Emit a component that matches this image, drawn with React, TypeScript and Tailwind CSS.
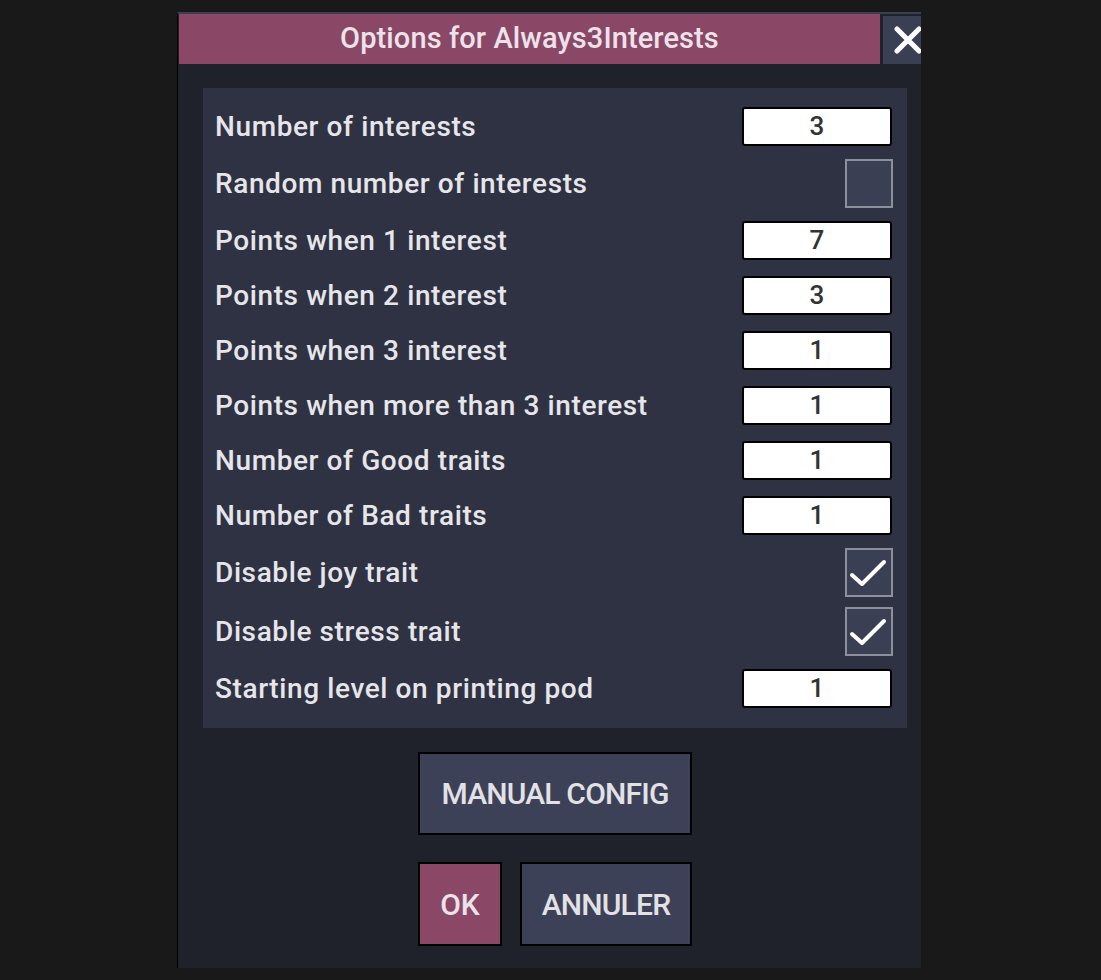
type Row =
  | { kind: "input"; label: string; value: string }
  | { kind: "check"; label: string; checked: boolean };

const rows: Row[] = [
  { kind: "input", label: "Number of interests", value: "3" },
  { kind: "check", label: "Random number of interests", checked: false },
  { kind: "input", label: "Points when 1 interest", value: "7" },
  { kind: "input", label: "Points when 2 interest", value: "3" },
  { kind: "input", label: "Points when 3 interest", value: "1" },
  { kind: "input", label: "Points when more than 3 interest", value: "1" },
  { kind: "input", label: "Number of Good traits", value: "1" },
  { kind: "input", label: "Number of Bad traits", value: "1" },
  { kind: "check", label: "Disable joy trait", checked: true },
  { kind: "check", label: "Disable stress trait", checked: true },
  { kind: "input", label: "Starting level on printing pod", value: "1" },
];

function Tick() {
  return (
    <svg width="44" height="44" viewBox="0 0 44 44">
      <path d="M5 24 L15 33 L37 11" fill="none" stroke="white" strokeWidth="4" strokeLinecap="round" strokeLinejoin="round" />
    </svg>
  );
}

export default function App() {
  return (
    <div className="min-h-screen bg-[#191919] pt-[12px] font-['Roboto',sans-serif]">
      <div className="ml-[177px] w-[744px] h-[956px] overflow-hidden border-l border-t-2 border-l-black border-t-[#3a3e4e] bg-[#1f222b] flex flex-col">
        <div className="flex h-[50px] items-stretch">
          <div className="shrink-0 ml-px w-[701px] bg-[#8a4766] flex items-center justify-center text-[29px] font-medium text-[#ece2ea] tracking-[0.1px]">
            Options for Always3Interests
          </div>
          <button className="shrink-0 ml-[3px] mt-[2px] w-[50px] bg-[#3b3f54] flex items-center justify-center text-white">
            <svg width="30" height="30" viewBox="0 0 30 30">
              <path d="M4 4 L26 26 M26 4 L4 26" stroke="white" strokeWidth="5" strokeLinecap="round" />
            </svg>
          </button>
        </div>

        <div className="ml-[25px] mr-[14px] mt-[24px] bg-[#2f3242] pt-[11px] pb-[12px] pl-[12px] pr-[15px] flex flex-col">
          {rows.map((r) =>
            r.kind === "input" ? (
              <div key={r.label} className="h-[55px] flex items-center justify-between">
                <span className="text-[28px] font-medium text-[#e6e6ea] tracking-[0.6px]">{r.label}</span>
                <div className="w-[150px] h-[39px] bg-white border-2 border-black rounded-[3px] flex items-center justify-center text-[26px] font-medium text-[#333]">
                  {r.value}
                </div>
              </div>
            ) : (
              <div key={r.label} className="h-[59px] flex items-center justify-between">
                <span className="text-[28px] font-medium text-[#e6e6ea] tracking-[0.6px]">{r.label}</span>
                <div className="mr-[-1px] w-[48px] h-[49px] bg-[#3b3f54] border-2 border-[#8c8f9c] flex items-center justify-center">
                  {r.checked && <Tick />}
                </div>
              </div>
            )
          )}
        </div>

        <div className="ml-[25px] mr-[14px] flex flex-col items-center">
          <button className="mt-[24px] w-[274px] h-[83px] bg-[#3d4157] border-2 border-black text-[30px] font-medium text-[#e2e2e6] tracking-[-0.8px]">
            MANUAL CONFIG
          </button>
          <div className="mt-[27px] flex gap-[18px]">
            <button className="w-[84px] h-[84px] bg-[#8a4766] border-2 border-black text-[30px] font-medium text-[#ece2ea]">
              OK
            </button>
            <button className="w-[172px] h-[84px] bg-[#3d4157] border-2 border-black text-[30px] font-medium text-[#e2e2e6] tracking-[-0.8px]">
              ANNULER
            </button>
          </div>
        </div>
      </div>
    </div>
  );
}
